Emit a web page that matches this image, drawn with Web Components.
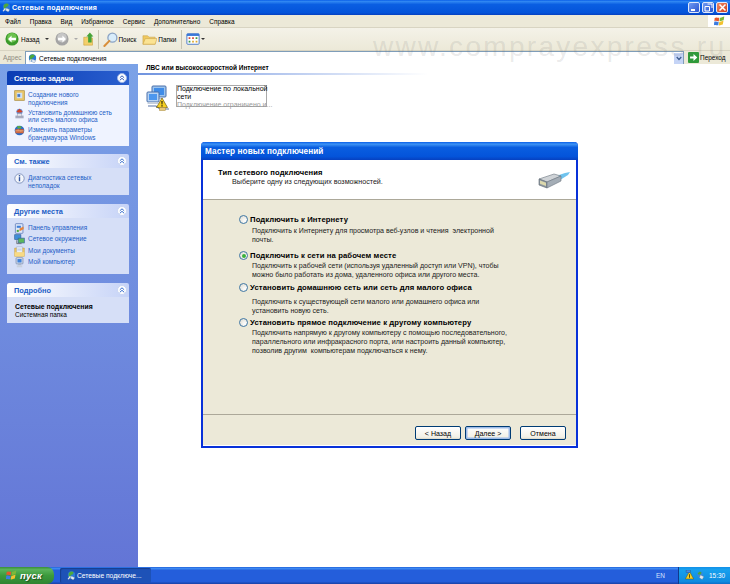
<!DOCTYPE html>
<html lang="ru">
<head>
<meta charset="utf-8">
<title>Сетевые подключения</title>
<style>
  html, body { margin: 0; padding: 0; width: 730px; height: 584px; overflow: hidden; }
  body { font-family: "Liberation Sans", Arial, sans-serif; font-size: 6.45px; color: #000; }
  task-panel b { font-size: 6.85px; }
</style>
</head>
<body>
<xp-explorer>
  <task-panel slot="side" title="Сетевые задачи" primary h="61" pad="5" step="1.5">
    <task-link icon="newconn">Создание нового<br>подключения</task-link>
    <task-link icon="home">Установить домашнюю сеть<br>или сеть малого офиса</task-link>
    <task-link icon="firewall">Изменить параметры<br>брандмауэра Windows</task-link>
  </task-panel>
  <task-panel slot="side" title="См. также" h="27" pad="5" step="1.5">
    <task-link icon="info">Диагностика сетевых<br>неполадок</task-link>
  </task-panel>
  <task-panel slot="side" title="Другие места" h="56" pad="5" step="0.3" style="margin-top:1px">
    <task-link icon="control">Панель управления</task-link>
    <task-link icon="network">Сетевое окружение</task-link>
    <task-link icon="docs">Мои документы</task-link>
    <task-link icon="computer">Мой компьютер</task-link>
  </task-panel>
  <task-panel slot="side" title="Подробно" h="26" details style="margin-top:1px">
    <b>Сетевые подключения</b><br>Системная папка
  </task-panel>

  <conn-list slot="main" title="ЛВС или высокоскоростной Интернет"></conn-list>

  <wizard-dialog slot="dialog" title="Мастер новых подключений" heading="Тип сетевого подключения" sub="Выберите одну из следующих возможностей.">
    <wiz-option label="Подключить к Интернету" top="15" desc="2">Подключить к Интернету для просмотра веб-узлов и чтения  электронной<br>почты.</wiz-option>
    <wiz-option label="Подключить к сети на рабочем месте" top="7" desc="1" checked>Подключить к рабочей сети (используя удаленный доступ или VPN), чтобы<br>можно было работать из дома, удаленного офиса или другого места.</wiz-option>
    <wiz-option label="Установить домашнюю сеть или сеть для малого офиса" top="4" desc="5">Подключить к существующей сети малого или домашнего офиса или<br>установить новую сеть.</wiz-option>
    <wiz-option label="Установить прямое подключение к другому компьютеру" top="3" desc="1">Подключить напрямую к другому компьютеру с помощью последовательного,<br>параллельного или инфракрасного порта, или настроить данный компьютер,<br>позволив другим  компьютерам подключаться к нему.</wiz-option>
  </wizard-dialog>

  <xp-taskbar slot="taskbar"></xp-taskbar>
</xp-explorer>

<script>
// small pictures, all hand drawn
const ICONS = {
  conn: '<circle cx="8" cy="7" r="6.500" fill="#2a7ad8"/><path d="M3 4c2-3 6-4 9-2l-2 4-3 1-1 4-3-2z" fill="#4ea83c"/><path d="M8 9l6 3-3 4-5-3z" fill="#dfe9f7" stroke="#5b6b7c" stroke-width=".5"/><path d="M1 14l4-5 2 1-4 5z" fill="#e6e6e6"/>',
  back: '<circle cx="8" cy="8" r="7.500" fill="#3a9a2c"/><circle cx="8" cy="6.500" r="5.500" fill="#6cc24e"/><path d="M3.500 8l4-4v2.500h5v3h-5V12z" fill="#fff"/>',
  forward: '<circle cx="8" cy="8" r="7.500" fill="#a4a4a4"/><circle cx="8" cy="6.500" r="5.500" fill="#c6c6c6"/><path d="M12.500 8l-4-4v2.500h-5v3h5V12z" fill="#fff"/>',
  up: '<path d="M2 6h4l1 1h5v8H2z" fill="#f3cf6b" stroke="#c79a34" stroke-width=".6"/><path d="M7 12V5H5l4-4.500L13 5h-2v7z" fill="#46a336"/>',
  search: '<circle cx="10" cy="6" r="4.800" fill="#d8ecfb" stroke="#8ba3c4" stroke-width="1.400"/><path d="M6.800 9.500L1.500 15" stroke="#d98f3a" stroke-width="2.200" stroke-linecap="round"/>',
  folders: '<path d="M1 4h5l1.500 1.500H14V13H1z" fill="#f0c95f" stroke="#c9a24a" stroke-width=".6"/><path d="M1 13l2.500-6H16l-2 6z" fill="#fbe393" stroke="#c9a24a" stroke-width=".6"/>',
  views: '<rect x="1" y="2" width="14" height="12" rx="1" fill="#fff" stroke="#3a6ec6"/><rect x="1" y="2" width="14" height="2.500" fill="#3a78d8"/><path d="M3 6h2v2H3zM7 6h2v2H7z" fill="#d64b3a"/><path d="M11 6h2v2h-2zM3 10h2v2H3z" fill="#3d9a3d"/><path d="M7 10h2v2H7zM11 10h2v2h-2z" fill="#e0a92e"/>',
  go: '<rect width="16" height="16" rx="1.500" fill="#2f9a3a"/><path d="M3 6.500h5V3l5.500 5L8 13V9.500H3z" fill="#fff"/>',
  newconn: '<rect x="1" y="1" width="14" height="14" fill="#e9c567" stroke="#a98a3a"/><rect x="4" y="4" width="8" height="8" fill="#cfe0f5"/><path d="M5 6h4v4H5z" fill="#4678c4"/>',
  home: '<circle cx="8" cy="5.500" r="4.500" fill="#5f8fdc"/><path d="M3.500 5l4.500-4 4.500 4-2 1.500h-5z" fill="#d2452a"/><path d="M2 11h12v4H2z" fill="#a8acc0"/><path d="M5 8h6v4H5z" fill="#e4e4ec" stroke="#7a7f96" stroke-width=".5"/>',
  firewall: '<circle cx="8" cy="8" r="7" fill="#2e6dc8"/><path d="M2 6h12v6H2z" fill="#c9562f"/><path d="M2 8h12M2 10h12M6 6v2M10 8v2" stroke="#f0c9a0" stroke-width=".7"/><path d="M5 1l6 1-1 3H5z" fill="#58ad44"/>',
  info: '<circle cx="8" cy="8" r="6.800" fill="#f4f6fb" stroke="#5d75a8"/><rect x="7" y="3" width="2" height="2" fill="#2f55a4"/><rect x="7" y="6" width="2" height="6" fill="#2f55a4"/>',
  control: '<rect x="2" y="1" width="11" height="14" rx="1" fill="#dfe8f8" stroke="#4a6bb0"/><path d="M4 4h6v3H4z" fill="#3f7ed8"/><path d="M8 8l6-3v4l-6 3z" fill="#e6843a"/><path d="M4 10h3v3H4z" fill="#4ea83c"/>',
  network: '<rect x="1" y="1" width="9" height="7" fill="#3f8fd8" stroke="#39659e"/><rect x="6" y="6" width="9" height="7" fill="#5cb85c" stroke="#39659e"/><path d="M4 9v5h7" stroke="#555" fill="none"/>',
  docs: '<path d="M1 3h14v12H1z" fill="#f2c75f" stroke="#b69238" stroke-width=".7"/><path d="M4 1h8v9H4z" fill="#fff" stroke="#8aa0c8" stroke-width=".7"/><path d="M5 3h6M5 5h6M5 7h6" stroke="#7b9ad2" stroke-width=".7"/><path d="M1 9h14v6H1z" fill="#f8da84"/>',
  computer: '<rect x="3" y="1" width="10" height="9" rx="1" fill="#d8dfeb" stroke="#6e82a8"/><rect x="5" y="3" width="6" height="5" fill="#3e82dc"/><path d="M6 10h4v2H6z" fill="#a8b4c8"/><path d="M4 12h8v3H4z" fill="#c8d0de"/>',
  flag: '<path d="M1 3c3-2 4 0 6.500-.5L7 7.500C5 8 3.500 6 .5 7.500z" fill="#e8552c"/><path d="M8.500 2.500C11 3 12 1 15 .8L14 6c-3 .5-3.500 1.800-6 1.300z" fill="#7cb83a"/><path d="M.4 8.500c3-1.500 4.500.6 6.400 0l-.6 5c-2 .5-3.500-1.500-6.400 0z" fill="#3d7ce0"/><path d="M7.800 8.300c2.500.5 3.500-1 6-1.300l-1 5.300c-2.500.2-3.500 1.700-6 1.300z" fill="#f2c22e"/>',
  lan: '<rect x="6" y="1" width="14" height="11" rx="1" fill="#9cc4ee" stroke="#4a6ea8"/><rect x="8" y="3" width="10" height="7" fill="#3f8ce8"/><path d="M9 12h6l2 2H7z" fill="#b6c4d8"/><rect x="1" y="7" width="12" height="10" rx="1" fill="#b8d4f4" stroke="#4a6ea8"/><rect x="3" y="9" width="8" height="6" fill="#4d97ee"/><path d="M3 17h8l2 2H1z" fill="#c5cfde"/><path d="M2 21h8l4 3h9" stroke="#5a74a8" fill="none" stroke-width="1.200"/><path d="M16 13l5.500 9.500h-11z" fill="#f6d021" stroke="#6f5b10" stroke-width=".7"/><path d="M15.400 16h1.200l-.2 3.500h-.8zM15.400 20.200h1.200v1.200h-1.200z" fill="#111"/><rect x="13.500" y="22.500" width="6" height="3" fill="#e8c878" stroke="#a88a3a" stroke-width=".5"/>',
  plug: '<path d="M18 5l9-3 5-1-2 3-8 5z" fill="#6fc3ee"/><path d="M1 8l15-5 7 2-14 6z" fill="#cfd3d7" stroke="#6c7680" stroke-width=".6"/><path d="M1 8l8 3v6l-8-3z" fill="#8e98a0" stroke="#5c6670" stroke-width=".6"/><path d="M9 11l14-6v5L9 17z" fill="#a4adb6" stroke="#6c7680" stroke-width=".6"/><path d="M2 9.500l6 2.200v3.300l-6-2.200z" fill="#dcd8ac"/>',
  tray1: '<path d="M8 2l6 11H2z" fill="#f6d021" stroke="#5c4c10" stroke-width=".7"/><path d="M7.500 6h1v4h-1zM7.500 10.700h1v1h-1z" fill="#111"/><rect x="3" y="0" width="6" height="4" fill="#3f8ce8" stroke="#24487c" stroke-width=".6"/>',
  tray2: '<circle cx="7" cy="6" r="5" fill="#3b86da"/><path d="M3 4l4-3 3 2-2 3H4z" fill="#47a83a"/><path d="M8 7l6 3-3 5-5-3z" fill="#e2e6ea" stroke="#63707c" stroke-width=".5"/>'
};

function svgIcon(name, size, box) {
  box = box || 16;
  return `<svg xmlns="http://www.w3.org/2000/svg" width="${size}" height="${size}" viewBox="0 0 ${box} ${box}" style="display:block;flex:none">${ICONS[name]}</svg>`;
}

class TaskLink extends HTMLElement {
  connectedCallback() {
    this.attachShadow({ mode: 'open' }).innerHTML = `
      <style>
        :host { display: flex; align-items: flex-start; gap: 3px; color: #215dc6; line-height: 7.500px; }
        span { white-space: nowrap; padding-top: 1px; }
      </style>
      ${svgIcon(this.getAttribute('icon'), 11)}
      <span><slot></slot></span>`;
  }
}

class TaskPanel extends HTMLElement {
  connectedCallback() {
    const primary = this.hasAttribute('primary');
    const details = this.hasAttribute('details');
    this.attachShadow({ mode: 'open' }).innerHTML = `
      <style>
        :host { display: block; width: 122px; flex: none; }
        header {
          height: 14px; display: flex; align-items: center; justify-content: space-between;
          padding: 0 2px 0 7px; border-radius: 2px 2px 0 0; box-sizing: border-box;
          font-weight: bold; font-size: 7.400px;
          background: ${primary ? 'linear-gradient(90deg,#0a3db4,#2a5fcf)' : 'linear-gradient(90deg,#fff,#c6d3f7)'};
          color: ${primary ? '#fff' : '#215dc6'};
        }
        .tog { width: 10px; height: 10px; border-radius: 50%; background: #fff; box-sizing: border-box;
          border: 1px solid ${primary ? '#9db4e6' : '#c9d5f3'}; display: flex; align-items: center; justify-content: center; }
        main {
          height: ${this.getAttribute('h')}px; box-sizing: border-box;
          padding: ${details ? '6px 8px' : (this.getAttribute('pad') || 4) + 'px 7px 0 7px'};
          background: ${primary ? '#eff3ff' : '#d6dff7'};
          display: flex; flex-direction: column; gap: ${this.getAttribute('step') || 0}px;
          ${details ? 'display:block; line-height:7.500px; color:#000;' : ''}
        }
      </style>
      <header><span>${this.getAttribute('title')}</span>
        <span class="tog"><svg width="6" height="6" viewBox="0 0 6 6"><path d="M.8 2.800L3 .8l2.200 2M.8 5.300L3 3.300l2.200 2" fill="none" stroke="${primary ? '#1c48b0' : '#215dc6'}" stroke-width=".9"/></svg></span>
      </header>
      <main><slot></slot></main>`;
  }
}

class ConnList extends HTMLElement {
  connectedCallback() {
    this.attachShadow({ mode: 'open' }).innerHTML = `
      <style>
        :host { display: block; padding: 0 0 0 8px; }
        h3 { margin: 0; font-size: 6.500px; line-height: 8px; font-weight: bold; }
        .rule { height: 2px; margin: 1px 0 0 -8px; width: 290px;
          background: linear-gradient(90deg,#6f93df,#fff); }
        .tile { display: flex; gap: 4px; margin-top: 10px; }
        .box { width: 91px; height: 22px; box-sizing: border-box; border: 1px solid #a9a9a9;
          font-size: 7px; white-space: nowrap; }
        .box div { margin-top: -1px; line-height: 8px; }
        .box i { font-style: normal; color: #9a9a9a; }
      </style>
      <h3>${this.getAttribute('title')}</h3>
      <div class="rule"></div>
      <div class="tile">
        ${svgIcon('lan', 26, 26)}
        <div class="box"><div>Подключение по локальной<br>сети<br><i>Подключение ограничено и...</i></div></div>
      </div>`;
  }
}

class WizOption extends HTMLElement {
  connectedCallback() {
    const checked = this.hasAttribute('checked');
    this.attachShadow({ mode: 'open' }).innerHTML = `
      <style>
        :host { display: block; margin-top: ${this.getAttribute('top')}px; }
        .row { display: flex; align-items: center; gap: 2px; height: 9px; }
        .radio { width: 9px; height: 9px; flex: none; border-radius: 50%; border: 1px solid #3f77a4; box-sizing: border-box;
          background: radial-gradient(circle at 70% 70%, #fff, #dcd9ce); display: flex; align-items: center; justify-content: center; }
        .radio i { width: 4px; height: 4px; border-radius: 50%; background: #3ab03a; }
        b { font-size: 7.700px; letter-spacing: .1px; white-space: nowrap; }
        p { margin: 0; padding: ${this.getAttribute('desc')}px 0 0 13px; line-height: 9px; white-space: pre; color: #1b1b1b; }
      </style>
      <div class="row"><span class="radio">${checked ? '<i></i>' : ''}</span><b>${this.getAttribute('label')}</b></div>
      <p><slot></slot></p>`;
  }
}

class XpButton extends HTMLElement {
  connectedCallback() {
    const focused = this.hasAttribute('default');
    this.attachShadow({ mode: 'open' }).innerHTML = `
      <style>
        :host { display: flex; width: 46px; height: 14px; box-sizing: border-box; align-items: center; justify-content: center;
          border: 1px solid #003c74; border-radius: 2px;
          background: linear-gradient(#fff,#f2f0e6 85%,#dcd8c8);
          ${focused ? 'box-shadow: inset 0 0 0 1.500px #9ebbe8;' : ''} }
      </style><slot></slot>`;
  }
}

class WizardDialog extends HTMLElement {
  connectedCallback() {
    this.attachShadow({ mode: 'open' }).innerHTML = `
      <style>
        :host { position: absolute; left: 201px; top: 142px; width: 377px; height: 306px; box-sizing: border-box; font-size: 7.050px;
          display: flex; flex-direction: column; border: 2px solid #0831d9; border-top: 0; border-radius: 4px 4px 0 0; background: #ece9d8; }
        .title { height: 18px; margin: 0 -2px; flex: none; padding-left: 4px; display: flex; align-items: center; border-radius: 4px 4px 0 0; box-sizing: border-box;
          background: linear-gradient(#0a5fe8 0,#3d93f5 12%,#0a5ee0 30%,#0454da 80%,#0640c0); color: #fff; font-weight: bold; font-size: 8.200px; letter-spacing: .1px; }
        .head { height: 40px; flex: none; background: #fff; border-bottom: 1px solid #aca899; box-sizing: border-box; display: flex; justify-content: space-between; padding: 8px 6px 0 15px; }
        .head b { display: block; font-size: 7.600px; letter-spacing: .1px; line-height: 9px; }
        .head span { display: block; padding: 1px 0 0 14px; line-height: 9px; color: #1b1b1b; font-size: 7.150px; }
        .head svg { margin-top: 3px; }
        .body { flex: 1; padding-left: 36px; }
        .foot { flex: none; height: 32px; border-top: 1px solid #aca899; box-shadow: 0 -1px 0 #fff inset; box-sizing: border-box;
          display: flex; justify-content: flex-end; padding: 11px 10px 0 0; gap: 4px; }
        .foot xp-button:last-child { margin-left: 5px; }
      </style>
      <div class="title">${this.getAttribute('title')}</div>
      <div class="head">
        <div><b>${this.getAttribute('heading')}</b><span>${this.getAttribute('sub')}</span></div>
        ${svgIcon('plug', 32, 32)}
      </div>
      <div class="body"><slot></slot></div>
      <div class="foot">
        <xp-button>&lt; Назад</xp-button>
        <xp-button default>Далее &gt;</xp-button>
        <xp-button>Отмена</xp-button>
      </div>`;
  }
}

class XpTaskbar extends HTMLElement {
  connectedCallback() {
    this.attachShadow({ mode: 'open' }).innerHTML = `
      <style>
        :host { display: flex; height: 17px; align-items: center; color: #fff; flex: none;
          background: linear-gradient(#1f5fd8 0,#3f8cf3 8%,#245edb 20%,#245edb 85%,#1941a5); }
        .start { width: 54px; height: 17px; box-sizing: border-box; display: flex; align-items: center; gap: 3px; padding-left: 6px;
          border-radius: 0 7px 7px 0; background: linear-gradient(#388e3a 0,#5ab35a 15%,#3c9a3c 50%,#2f8432); }
        .start b { font: italic bold 9.500px "Liberation Sans", Arial, sans-serif; letter-spacing: .2px; text-shadow: 1px 1px 1px #1c4a1c; }
        .task { width: 91px; height: 15px; box-sizing: border-box; margin-left: 6px; display: flex; align-items: center; gap: 1px; padding-left: 7px;
          border-radius: 2px; background: #1e52b7; box-shadow: inset 1px 1px 1px #163f8e; white-space: nowrap; font-size: 6.700px; }
        .lang { margin-left: auto; margin-right: 13px; color: #d6e4fb; }
        .tray { width: 52px; height: 17px; box-sizing: border-box; display: flex; align-items: center; gap: 1px; padding-left: 5px;
          background: linear-gradient(#1290e8,#17a0ee 15%,#0f8ce0 85%,#0d6ec8); border-left: 1px solid #0f3a8c; }
        .tray span { margin-left: 3px; }
      </style>
      <div class="start">${svgIcon('flag', 11)}<b>пуск</b></div>
      <div class="task">${svgIcon('conn', 9)}<span>Сетевые подключе...</span></div>
      <span class="lang">EN</span>
      <div class="tray">${svgIcon('tray1', 11)}${svgIcon('tray2', 9)}<span>15:30</span></div>`;
  }
}

class XpExplorer extends HTMLElement {
  connectedCallback() {
    const capBtn = (bg, mark) => `<span class="cap" style="background:${bg}"><svg width="9" height="9" viewBox="0 0 9 9">${mark}</svg></span>`;
    this.attachShadow({ mode: 'open' }).innerHTML = `
      <style>
        :host { display: flex; flex-direction: column; width: 730px; height: 584px; position: relative; overflow: hidden; background: #fff; }
        .titlebar { height: 15px; flex: none; display: flex; align-items: center; padding: 0 2px; gap: 1px; box-sizing: border-box;
          background: linear-gradient(#0a5fe8 0,#2f86f2 10%,#0a5ee2 30%,#0454da 85%,#0640c0); color: #fff; font-weight: bold; font-size: 7px; letter-spacing: .3px; }
        .titlebar .t { flex: 1; }
        .cap { width: 12px; height: 11.500px; margin-left: 1px; border-radius: 2px; border: 1px solid #dfe8fa; box-sizing: border-box; display: flex; align-items: center; justify-content: center; }
        .menu { height: 13px; flex: none; display: flex; background: #ece9d8; border-bottom: 1px solid #d8d4c2; box-sizing: border-box; }
        .menu nav { flex: 1; display: flex; gap: 9px; align-items: center; padding-left: 5px; }
        .flagbox { width: 22px; background: #fff; display: flex; align-items: center; justify-content: center; }
        .tools { height: 23px; flex: none; display: flex; align-items: center; padding-left: 5px; background: linear-gradient(#f4f2e8,#ece9d8); border-bottom: 1px solid #d8d4c2; box-sizing: border-box; }
        .tools .l { margin-left: 2px; }
        .tools .l.near { margin-left: 0; }
        .sep { width: 1px; height: 19px; background: #c8c5b2; margin: 0 4px 0 2px; }
        .tri { width: 0; height: 0; border: 2px solid transparent; border-top: 2.500px solid #333; border-bottom: 0; margin: 0 6px 0 6px; }
        .tri.off { border-top-color: #aaa; margin: 0 4px 0 5px; }
        .addr { height: 13px; flex: none; display: flex; align-items: center; background: #ece9d8; box-sizing: border-box; }
        .addr .a { width: 25px; padding-left: 3px; box-sizing: border-box; color: #8c8a7e; }
        .field { flex: 1; height: 13px; display: flex; align-items: center; gap: 2px; background: #fff; border: 1px solid #7f9db9; border-bottom: 0; box-sizing: border-box; padding-left: 2px; }
        .field .s { flex: 1; }
        .drop { width: 9px; height: 11px; background: #c5d4f6; display: flex; align-items: center; justify-content: center; }
        .goto { width: 46px; display: flex; align-items: center; gap: 1px; padding-left: 4px; box-sizing: border-box; }
        .content { flex: 1; min-height: 0; display: flex; }
        .side { width: 138px; flex: none; background: linear-gradient(#7ba2e7,#6375d6); padding: 7px 0 0 7px; box-sizing: border-box;
          display: flex; flex-direction: column; gap: 8px; }
        .main { flex: 1; min-width: 0; }
        .watermark { position: absolute; left: 373px; top: 33px; font-size: 28px; letter-spacing: 2.300px; color: rgba(110,110,110,.15); white-space: nowrap; line-height: 28px; }
      </style>
      <div class="titlebar">${svgIcon('conn', 9)}<span class="t">Сетевые подключения</span>
        ${capBtn('linear-gradient(135deg,#6f9af2,#2a55d0)', '<rect x="1" y="6" width="4" height="2" fill="#fff"/>')}
        ${capBtn('linear-gradient(135deg,#6f9af2,#2a55d0)', '<path d="M3.500 1h4.500v4M1 3.500h4.500v4.500H1z" fill="none" stroke="#fff"/>')}
        ${capBtn('linear-gradient(135deg,#ec8a68,#d2401c)', '<path d="M1.500 1.500l6 6M7.500 1.500l-6 6" stroke="#fff" stroke-width="1.500"/>')}
      </div>
      <div class="menu"><nav><span>Файл</span><span>Правка</span><span>Вид</span><span>Избранное</span><span>Сервис</span><span>Дополнительно</span><span>Справка</span></nav><div class="flagbox">${svgIcon('flag', 11)}</div></div>
      <div class="tools">
        ${svgIcon('back', 14)}<span class="l">Назад</span><span class="tri"></span>
        ${svgIcon('forward', 14)}<span class="tri off"></span>
        ${svgIcon('up', 14)}<span class="sep"></span>
        ${svgIcon('search', 15)}<span class="l near">Поиск</span><span style="width:6px"></span>
        ${svgIcon('folders', 15)}<span class="l near" style="margin-left:1px">Папки</span><span class="sep" style="margin-left:5px"></span>
        ${svgIcon('views', 14)}<span class="tri" style="margin-left:1px"></span>
      </div>
      <div class="addr"><span class="a">Адрес</span>
        <div class="field">${svgIcon('conn', 9)}<span class="s">Сетевые подключения</span><span class="drop"><svg width="6" height="5" viewBox="0 0 6 5"><path d="M.7 1L3 3.500 5.300 1" fill="none" stroke="#3c5a8c" stroke-width="1.200"/></svg></span></div>
        <div class="goto">${svgIcon('go', 11)}<span>Переход</span></div>
      </div>
      <div class="content">
        <div class="side"><slot name="side"></slot></div>
        <div class="main"><slot name="main"></slot></div>
      </div>
      <slot name="taskbar"></slot>
      <div class="watermark">www.comprayexpress.ru</div>
      <slot name="dialog"></slot>`;
  }
}

customElements.define('task-link', TaskLink);
customElements.define('task-panel', TaskPanel);
customElements.define('conn-list', ConnList);
customElements.define('wiz-option', WizOption);
customElements.define('xp-button', XpButton);
customElements.define('wizard-dialog', WizardDialog);
customElements.define('xp-taskbar', XpTaskbar);
customElements.define('xp-explorer', XpExplorer);
</script>
</body>
</html>
